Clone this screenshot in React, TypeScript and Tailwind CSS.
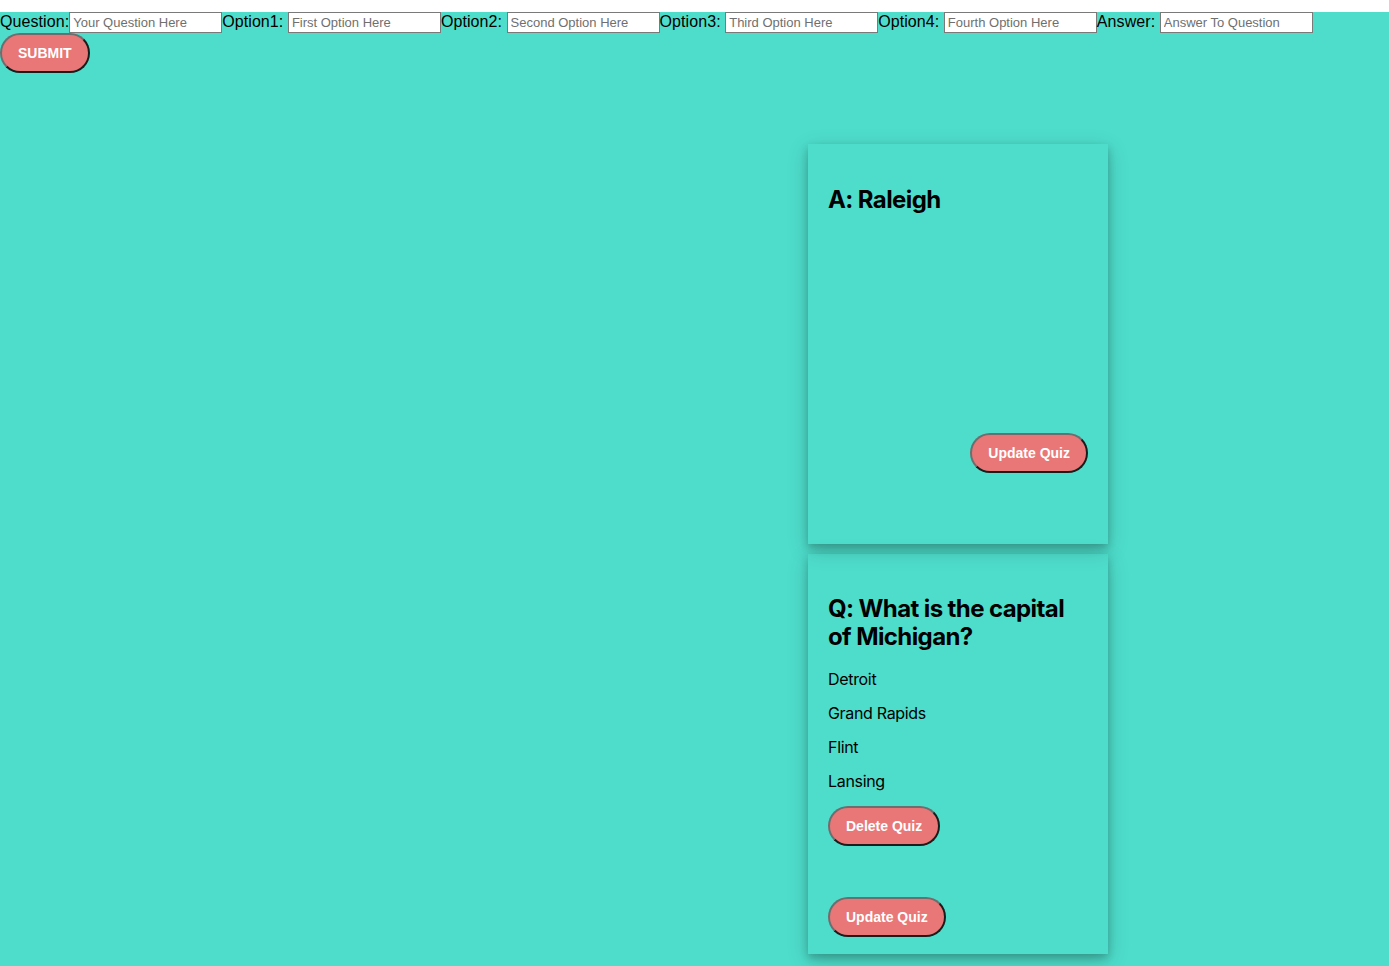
import React from 'react';

interface Field {
    label: string;
    placeholder: string;
}

const fields: Field[] = [
    { label: 'Question:', placeholder: 'Your Question Here' },
    { label: 'Option1: ', placeholder: 'First Option Here' },
    { label: 'Option2: ', placeholder: 'Second Option Here' },
    { label: 'Option3: ', placeholder: 'Third Option Here' },
    { label: 'Option4: ', placeholder: 'Fourth Option Here' },
    { label: 'Answer: ', placeholder: 'Answer To Question' }
];

const btn =
    "rounded-full h-10 bg-[#e97777] text-white font-bold text-[14px] font-['Liberation_Sans',Arial,sans-serif] border-2 border-t-[#6e6e6e] border-l-[#6e6e6e] border-b-[#1c1c1c] border-r-[#1c1c1c]";

const card =
    "w-[300px] h-[400px] p-5 flex flex-col shadow-[0_4px_8px_0_rgba(0,0,0,0.2),0_6px_20px_0_rgba(0,0,0,0.19)] font-['Inter',sans-serif] text-black";

const App: React.FC = () => {
    return (
        <div className="min-h-[966px] bg-[#4eddcb] text-black font-['Liberation_Sans',Arial,sans-serif]">
            {/* Form */}
            <div className="flex items-center mt-3 h-[21px]">
                {fields.map((f) => (
                    <React.Fragment key={f.label}>
                        <span className="whitespace-pre text-base leading-[21px] tracking-[0.005em] -translate-y-px">{f.label}</span>
                        <input
                            placeholder={f.placeholder}
                            className="w-[153px] h-[21px] bg-white border border-[#7a7a7a] px-[3px] text-[13px] placeholder:text-[#6f6f6f] outline-none"
                        />
                    </React.Fragment>
                ))}
            </div>
            <button className={`${btn} px-4`}>SUBMIT</button>

            {/* Cards */}
            <div className="flex flex-col gap-[10px] pl-[808px] pt-[71px]">
                <div className={card}>
                    <h2 className="text-2xl font-bold leading-[28px] tracking-[-0.025em] mt-[22px]">A: Raleigh</h2>
                    <div className="flex justify-end mt-[219px]">
                        <button className={`${btn} px-4`}>Update Quiz</button>
                    </div>
                </div>

                <div className={card}>
                    <h2 className="text-2xl font-bold leading-[28px] tracking-[-0.025em] mt-[21px] mb-[19px]">
                        Q: What is the capital of Michigan?
                    </h2>
                    {['Detroit', 'Grand Rapids', 'Flint', 'Lansing'].map((o) => (
                        <p key={o} className="text-base leading-[18px] tracking-[-0.02em] mb-4">{o}</p>
                    ))}
                    <div>
                        <button className={`${btn} px-4`}>Delete Quiz</button>
                    </div>
                    <div className="mt-[51px]">
                        <button className={`${btn} px-4`}>Update Quiz</button>
                    </div>
                </div>
            </div>
        </div>
    );
};

export default App;
